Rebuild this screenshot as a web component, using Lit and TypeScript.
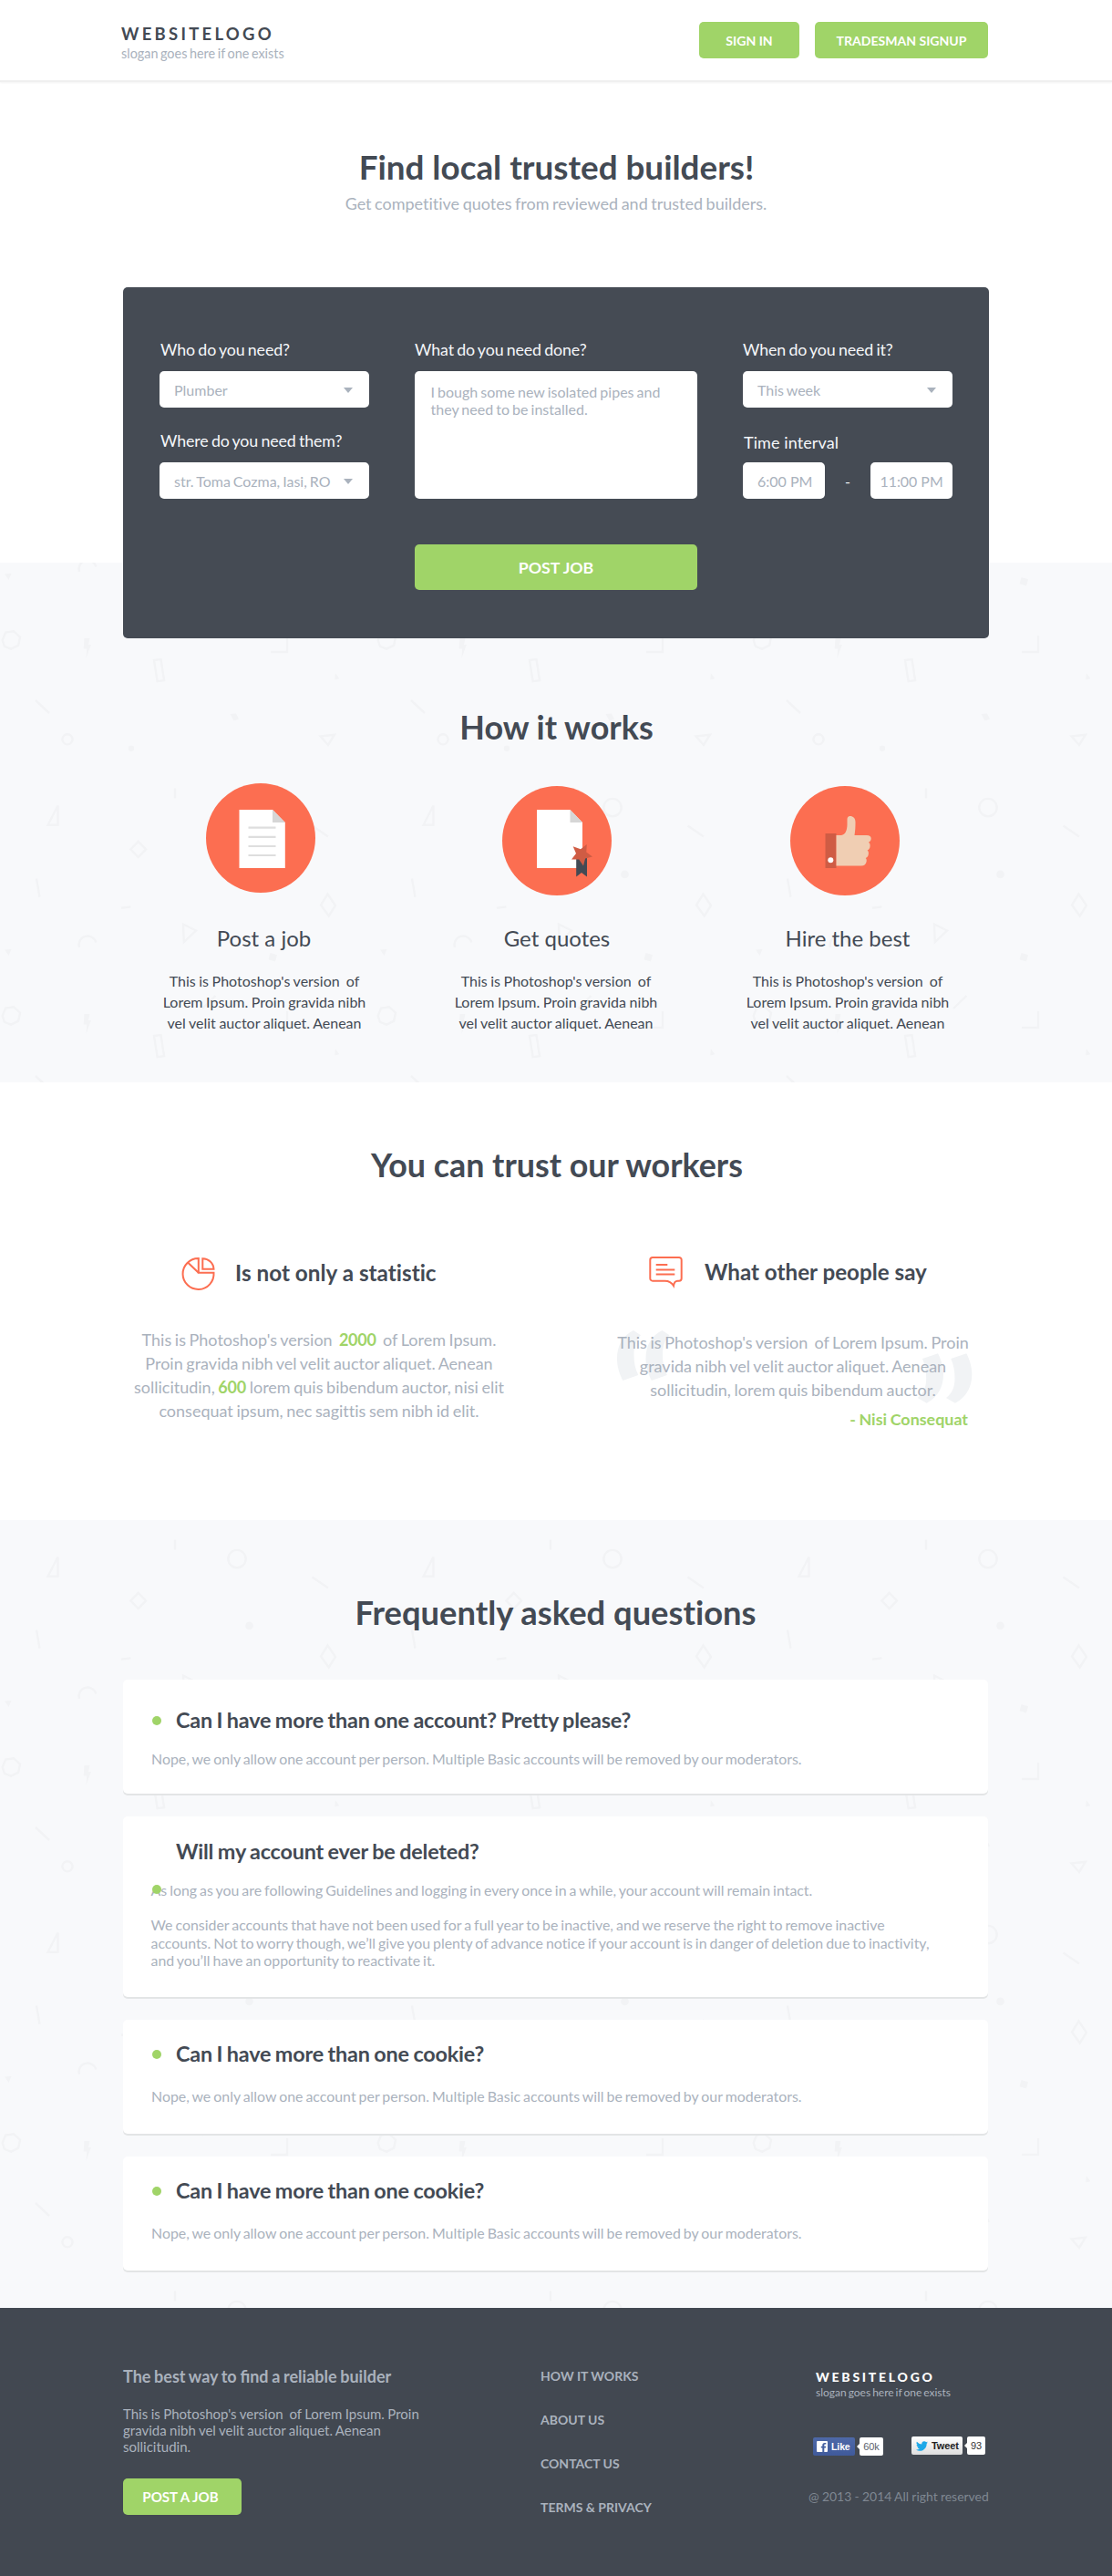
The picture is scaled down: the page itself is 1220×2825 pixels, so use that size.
import { LitElement, html, css, svg, nothing } from "lit";
import { customElement, property } from "lit/decorators.js";

const reset = css`
  *, *::before, *::after { box-sizing: border-box; }
  h1, h2, h3, p, ul { margin: 0; padding: 0; font-weight: 400; }
  ul { list-style: none; }
  svg { display: block; }
`;

@customElement("shape-pattern")
class ShapePattern extends LitElement {
  /** Distance of the section from the page top, so tiles line up between sections. */
  @property({ type: Number }) offset = 0;

  static styles = css`
    :host { position: absolute; inset: 0; display: block; overflow: hidden; }
    svg { display: block; width: 100%; height: 100%; }
    .line { fill: none; stroke: #f2f3f5; stroke-width: 2.4; }
    .solid { fill: #f2f3f5; }
  `;

  render() {
    return html`<svg aria-hidden="true">
      <defs>
        <pattern id="tile" width="412" height="412" patternUnits="userSpaceOnUse" patternTransform="translate(0 ${-(this.offset % 412)})">
          <g class="line">
            <path d="M86.8 215a9.6 9.6 0 1 1 18.6-5.5" />
            <path d="M2.7 290l3.4-8.5 8.9-1.3 7 6.4-1.8 9-8 4-7.3-2.8z" />
            <path d="M169 312l7.5-1 3.6 23.2-7.5 1z" />
            <path d="M39 356l15 14" />
            <circle cx="74" cy="398.8" r="5.6" />
            <path d="M297 303h18v-18" />
            <path d="M351.5 395.5l15.5-1.8-7 11.3z" />
            <path d="M192 40.5v11" />
            <path d="M63.5 59.5v21.3h-11z" />
            <circle cx="260" cy="61.6" r="9.7" />
            <path d="M342.5 81.6l17.5 11.8" />
            <path d="M151.7 98.8l8.4 8.6-8.4 8.6-8.4-8.6z" />
            <path d="M40 139.5l3.5 20.3" />
            <path d="M359.5 156.5l8.5 12.5-7.3 11.5-8.7-12z" />
            <path d="M132.8 171.8l10.7-1.4" />
            <path d="M201 189.5l14 7-13.2 12.5z" />
            <path d="M222 282l14.5-14" />
          </g>
          <g class="solid">
            <path d="M5 217.5l7.5-.5-3 7z" />
            <path d="M92.5 288h6l-1.6 7h3l-5.5 15 .8-10.5h-3.6z" />
            <circle cx="144" cy="408.8" r="3.2" />
            <path d="M367.8 326l4.5 6.3-5 1.2z" />
            <path d="M252.5 371l6.5-.5 3 6-5.5 2z" />
            <circle cx="273.5" cy="134.9" r="4.3" />
            <path d="M296.5 221l7.5 2.2-2 7.3-7.5-2.2z" />
          </g>
        </pattern>
      </defs>
      <rect width="100%" height="100%" fill="url(#tile)" />
    </svg>`;
  }
}

@customElement("site-header")
class SiteHeader extends LitElement {
  static styles = [reset, css`
    :host { display: flex; justify-content: space-between; align-items: flex-start; height: 88px; padding: 24px 136px 0 133px; background: #fff; box-shadow: 0 2px 0 #efefef, 0 3px 2px rgba(0,0,0,.05); }
    .logo { padding-top: 3px; }
    .name { font-size: 18.5px; line-height: 20px; font-weight: 700; letter-spacing: 3.25px; color: #434a54; }
    .slogan { margin-top: 2px; font-size: 14.4px; line-height: 20px; word-spacing: -1.1px; color: #aab2bd; }
    .actions { display: flex; gap: 17px; }
    .btn { display: flex; align-items: center; justify-content: center; width: 110px; height: 40px; border-radius: 5px; background: #a0d468; color: #fff; font-size: 14.05px; font-weight: 700; }
    .btn.wide { width: 190px; }
  `];
  render() {
    return html`
      <div class="logo"><div class="name">WEBSITELOGO</div><div class="slogan">slogan goes here if one exists</div></div>
      <div class="actions"><a class="btn">SIGN IN</a><a class="btn wide">TRADESMAN SIGNUP</a></div>`;
  }
}

@customElement("job-form")
class JobForm extends LitElement {
  static styles = [reset, css`
    :host { position: relative; z-index: 2; display: grid; grid-template-columns: 230px 310px 230px; column-gap: 50px; align-items: start; width: 950px; height: 385px; margin: 79px 0 -83px 135px; padding: 57px 40px 0; border-radius: 5px; background: #454b54; }
    .label { height: 22px; margin-bottom: 13px; color: #f5f7fa; font-size: 17.8px; line-height: 22px; letter-spacing: -.1px; word-spacing: -1.2px; white-space: nowrap; }
    .label.second { margin-top: 25px; }
    .label.inset { padding-left: 1px; }
    .label.time { margin-top: 27px; margin-bottom: 11px; padding-left: 1px; font-size: 18px; letter-spacing: .1px; word-spacing: 0; }
    .field { display: flex; align-items: center; justify-content: space-between; height: 40px; padding: 0 18.5px 0 16px; border-radius: 5px; background: #fff; color: #aab2bd; font-size: 16px; word-spacing: -1.1px; white-space: nowrap; }
    .caret { width: 0; height: 0; margin-top: 2px; border: 5.5px solid transparent; border-top: 6px solid #aab2bd; border-bottom: 0; }
    .area { height: 140px; padding: 13px 16px 0 17.5px; border-radius: 5px; background: #fff; color: #aab2bd; font-size: 16px; line-height: 19.2px; word-spacing: -1px; white-space: nowrap; }
    .submit { display: flex; align-items: center; justify-content: center; height: 50px; margin-top: 50px; border-radius: 5px; background: #a0d468; color: #fff; font-size: 17.75px; font-weight: 700; }
    .range { display: flex; align-items: center; justify-content: space-between; color: #f5f7fa; font-size: 16px; }
    .range .field { width: 90px; justify-content: flex-start; padding-right: 0; word-spacing: 0; }
    .range .field.to { padding-left: 10.5px; font-size: 15.88px; }
  `];
  select(value: string) {
    return html`<div class="field"><span>${value}</span><i class="caret"></i></div>`;
  }
  render() {
    return html`
      <div>
        <p class="label inset">Who do you need?</p>${this.select("Plumber")}
        <p class="label inset second">Where do you need them?</p>${this.select("str. Toma Cozma, Iasi, RO")}
      </div>
      <div>
        <p class="label">What do you need done?</p>
        <div class="area">I bough some new isolated pipes and<br />they need to be installed.</div>
        <a class="submit">POST JOB</a>
      </div>
      <div>
        <p class="label">When do you need it?</p>${this.select("This week")}
        <p class="label time">Time interval</p>
        <div class="range"><div class="field">6:00 PM</div><span>-</span><div class="field to">11:00 PM</div></div>
      </div>`;
  }
}

const stepIcons = {
  post: svg`
    <circle cx="60" cy="60" r="60" fill="#fc6e51" />
    <path d="M36.5 29h36.5l13.8 14v50H36.5z" fill="#fff" />
    <path d="M73 29l13.8 14H73z" fill="#d6d6d6" />
    <path d="M46.5 48.7h30M46.5 58.8h30M46.5 69h30M46.5 79h30" stroke="#dedede" stroke-width="2.2" />`,
  quotes: svg`
    <circle cx="60" cy="60" r="60" fill="#fc6e51" />
    <path d="M38 26h36.5L88 40v50H38z" fill="#fff" />
    <path d="M74.5 26L88 40H74.5z" fill="#d6d6d6" />
    <path d="M81.2 78H93v21.6L87 95l-5.8 4.6z" fill="#434a54" />
    <path d="M92.8 64l-.5 8.5 6.7 4.9-7.9 2-2.1 8-4.8-6.900-8.2 0 5-6.4-3.3-7.8 8.3 2.9z" fill="#cf5c44" />`,
  hire: svg`
    <circle cx="60" cy="60" r="60" fill="#fc6e51" />
    <rect x="38.5" y="52" width="12" height="38" fill="#cf5c44" />
    <circle cx="44.3" cy="81.3" r="3" fill="#fff" />
    <path d="M50.5 54h5.5c4.5-.6 6.5-5.5 6.5-12v-5.5c0-2.3 1.2-3.5 3-3.5 3.6 0 6 2.3 6 6.5 0 5.5-.2 10-1 14.5H84c3 0 4.7 1.2 4.7 3.6 0 2-.9 3.6-2.8 4.1 1.3.8 1.7 2 1.7 3.7 0 2.3-1 4.2-3 5 1.1.8 1.4 2 1.3 3.7-.1 2.5-1.2 4.2-3.2 4.9 1 .8 1.2 2 1 3.5-.4 3-2.4 5-6 5H50.5z" fill="#f0ceb3" />`,
};

@customElement("how-it-works")
class HowItWorks extends LitElement {
  static styles = [reset, css`
    :host { position: relative; display: block; height: 570px; padding-top: 158px; background: #f8f9fb; color: #434a54; }
    .body { position: relative; }
    h2 { padding-left: 1px; font-size: 35.95px; line-height: 45px; font-weight: 700; text-align: center; }
    .steps { display: grid; grid-template-columns: repeat(3, 320px); width: 960px; margin: 42px 0 0 130px; text-align: center; }
    .icon { width: 120px; height: 120px; margin: 0 auto; }
    .icon.post { margin: -3px 0 0 95.5px; }
    .icon.quotes { margin-left: 101px; }
    .icon.hire { margin-left: 96.5px; }
    h3 { margin-top: 32px; font-size: 24px; line-height: 30px; }
    .icon.post + h3 { margin-top: 35px; padding-right: 1px; }
    .icon.quotes + h3 { padding-left: 2px; }
    p { margin-top: 20px; font-size: 16px; line-height: 23px; word-spacing: -.5px; }
  `];
  render() {
    const steps = [["post", "Post a job"], ["quotes", "Get quotes"], ["hire", "Hire the best"]] as const;
    return html`<shape-pattern .offset=${617}></shape-pattern>
      <div class="body">
        <h2>How it works</h2>
        <div class="steps">${steps.map(([key, title]) => html`
          <div>
            <svg class="icon ${key}" viewBox="0 0 120 120">${stepIcons[key]}</svg>
            <h3>${title}</h3>
            <p>This is Photoshop's version&nbsp; of<br />Lorem Ipsum. Proin gravida nibh<br />vel velit auctor aliquet. Aenean</p>
          </div>`)}
        </div>
      </div>`;
  }
}

@customElement("trust-section")
class TrustSection extends LitElement {
  static styles = [reset, css`
    :host { display: block; height: 480px; padding-top: 68px; background: #fff; color: #434a54; }
    h2 { padding-left: 2px; font-size: 35.85px; line-height: 45px; font-weight: 700; text-align: center; }
    .cols { display: grid; grid-template-columns: 520px 520px; width: 1040px; margin: 78px 0 0 90px; }
    .head { display: flex; align-items: center; gap: 21px; height: 38px; padding-left: 109px; }
    .head svg { width: 38px; height: 38px; fill: none; stroke: #fc6e51; stroke-width: 2; }
    .head h3 { margin-top: -3px; font-size: 24.3px; line-height: 30px; font-weight: 700; }
    .say .head { gap: 23px; margin-top: -1px; padding-left: 102px; }
    .say .head h3 { font-size: 24.2px; }
    .text { margin-top: 40px; color: #aab2bd; font-size: 18px; line-height: 26px; word-spacing: -1px; text-align: center; white-space: nowrap; }
    b { color: #a0d468; font-weight: 700; letter-spacing: -.2px; }
    .quote { position: relative; margin-top: 44px; }
    .quote .text { position: relative; margin: 0; }
    .marks { position: absolute; left: 60px; top: -1px; width: 400px; height: 84px; fill: #f1f3f5; }
    .author { margin-top: 6px; padding-right: 68px; color: #a0d468; font-size: 17.9px; line-height: 26px; font-weight: 700; word-spacing: -.7px; text-align: right; }
  `];
  render() {
    return html`
      <h2>You can trust our workers</h2>
      <div class="cols">
        <div>
          <div class="head">
            <svg viewBox="0 0 38 38"><path d="M18.8 2A17 17 0 1 0 35.5 17.8H18.8z" /><path d="M7 6.5l11.8 11.3M23.3 2.2v11.5h12.2A12 12 0 0 0 23.3 2.2z" /></svg>
            <h3>Is not only a statistic</h3>
          </div>
          <p class="text">This is Photoshop's version&nbsp; <b>2000</b>&nbsp; of Lorem Ipsum.<br />Proin gravida nibh vel velit auctor aliquet. Aenean<br />sollicitudin, <b>600</b> lorem quis bibendum auctor, nisi elit<br />consequat ipsum, nec sagittis sem nibh id elit.</p>
        </div>
        <div class="say">
          <div class="head">
            <svg viewBox="0 0 38 38"><path d="M4 2h29a2.7 2.7 0 0 1 2.7 2.7V25a2.7 2.7 0 0 1-2.7 2.7h-1.5c-2.5 0-4 1.8-4.5 5.3-2-3.3-5-5.3-9.5-5.3H4A2.7 2.7 0 0 1 1.3 25V4.7A2.7 2.7 0 0 1 4 2z" /><path d="M7.7 10h12.6M7.7 15.5h20.6M7.7 20.5h20.6" /></svg>
            <h3>What other people say</h3>
          </div>
          <div class="quote">
            <svg class="marks" viewBox="0 0 400 84" aria-hidden="true">
              <path d="M25 1l8 5.3c-6 6.5-7.5 13-7.5 22 0 8 1.3 14.5 4.8 21.7L13.3 56C9 47 7 40.5 7 32 7 18 12.5 7.5 25 1z" />
              <path transform="translate(31.5 0)" d="M25 1l8 5.3c-6 6.5-7.5 13-7.5 22 0 8 1.3 14.5 4.8 21.7L13.3 56C9 47 7 40.5 7 32 7 18 12.5 7.5 25 1z" />
              <path d="M342 32l17-5.7c4.3 8.5 6 15.5 6 23 0 14-6 24.5-18.3 31.4l-10-5.7c7.5-6 9.5-13 9.5-21.5 0-8-1.2-14.5-4.2-21.5z" />
              <path transform="translate(31.3 0)" d="M342 32l17-5.7c4.3 8.5 6 15.5 6 23 0 14-6 24.5-18.3 31.4l-10-5.7c7.5-6 9.5-13 9.5-21.5 0-8-1.2-14.500-4.2-21.5z" />
            </svg>
            <p class="text">This is Photoshop's version&nbsp; of Lorem Ipsum. Proin<br />gravida nibh vel velit auctor aliquet. Aenean<br />sollicitudin, lorem quis bibendum auctor.</p>
          </div>
          <p class="author">- Nisi Consequat</p>
        </div>
      </div>`;
  }
}

interface Faq { title: string; kind: string; body: string[][]; }

const nope = "Nope, we only allow one account per person. Multiple Basic accounts will be removed by our moderators.";
const faqs: Faq[] = [
  { title: "Can I have more than one account? Pretty please?", kind: "first", body: [[nope]] },
  {
    title: "Will my account ever be deleted?", kind: "long", body: [
      ["As long as you are following Guidelines and logging in every once in a while, your account will remain intact."],
      ["We consider accounts that have not been used for a full year to be inactive, and we reserve the right to remove inactive",
        "accounts. Not to worry though, we’ll give you plenty of advance notice if your account is in danger of deletion due to inactivity,",
        "and you’ll have an opportunity to reactivate it."],
    ],
  },
  { title: "Can I have more than one cookie?", kind: "", body: [[nope]] },
  { title: "Can I have more than one cookie?", kind: "", body: [[nope]] },
];

@customElement("faq-section")
class FaqSection extends LitElement {
  static styles = [reset, css`
    :host { position: relative; display: block; height: 864px; padding-top: 79px; background: #f8f9fb; color: #434a54; }
    .body { position: relative; }
    h2 { padding-right: 1px; font-size: 36.35px; line-height: 45px; font-weight: 700; text-align: center; }
    .list { display: flex; flex-direction: column; gap: 25px; width: 949px; margin: 51px 0 0 135px; }
    .card { position: relative; height: 125px; padding: 22px 30px 0 31px; border-radius: 5px; background: #fff; box-shadow: 0 2px 0 #e3e5e6; }
    .title { display: flex; align-items: center; gap: 16px; height: 30px; margin-bottom: 22px; padding-left: 1px; }
    .dot { width: 10px; height: 10px; margin-top: 2px; border-radius: 50%; background: #a0d468; }
    h3 { font-size: 23.4px; line-height: 30px; font-weight: 700; letter-spacing: -.2px; word-spacing: -.9px; }
    p { color: #aab2bd; font-size: 15.9px; line-height: 19px; word-spacing: -1.05px; white-space: nowrap; }
    .first { padding-top: 29px; }
    .first .title { margin-bottom: 18px; }
    .long { height: 198px; padding: 23px 30px 0 30.5px; }
    .long .title { margin-bottom: 18px; padding-left: 27.5px; }
    .long .dot { position: absolute; left: 32px; top: 75px; margin: 0; }
    .long p { line-height: 19.4px; }
    .long p + p { margin-top: 19px; }
  `];
  render() {
    return html`<shape-pattern .offset=${1667}></shape-pattern>
      <div class="body">
        <h2>Frequently asked questions</h2>
        <div class="list">${faqs.map(f => html`
          <div class="card ${f.kind}">
            <div class="title">${f.kind === "long" ? nothing : html`<i class="dot"></i>`}<h3>${f.title}</h3></div>
            ${f.body.map(p => html`<p>${p.map((line, i) => html`${i ? html`<br />` : nothing}${line}`)}</p>`)}
            ${f.kind === "long" ? html`<i class="dot"></i>` : nothing}
          </div>`)}
        </div>
      </div>`;
  }
}

@customElement("site-footer")
class SiteFooter extends LitElement {
  static styles = [reset, css`
    :host { display: grid; grid-template-columns: 458px 294px 200px; align-items: start; height: 294px; padding: 63px 0 0 135px; background: #424851; color: #aab2bd; }
    h3 { font-size: 18px; line-height: 24px; font-weight: 700; word-spacing: -.7px; font-variant-ligatures: common-ligatures; }
    .about p { margin-top: 20px; font-size: 15px; line-height: 18px; word-spacing: -.4px; white-space: nowrap; }
    .btn { display: flex; align-items: center; justify-content: center; width: 130px; height: 40px; margin-top: 26px; padding-right: 4px; border-radius: 5px; background: #a0d468; color: #fff; font-size: 15.09px; font-weight: 700; }
    .links { margin-top: -12px; font-size: 14px; line-height: 48px; font-weight: 700; }
    .name { margin: 5px 0 0 8px; color: #fff; font-size: 14px; line-height: 16px; font-weight: 900; letter-spacing: 2.75px; }
    .slogan { margin: 1px 0 0 8px; font-size: 12px; line-height: 16px; word-spacing: -1.1px; }
    .social { display: flex; align-items: flex-start; margin-top: 40px; padding-left: 5px; font-family: "Liberation Sans", Arial, sans-serif; font-size: 11px; line-height: 20px; letter-spacing: -.1px; }
    .like, .tweet { display: flex; align-items: center; height: 20px; border-radius: 2px; font-weight: 700; }
    .like { width: 46px; margin-top: 1px; padding-left: 4px; gap: 4px; background: linear-gradient(#4e69a8, #3f5a9b); color: #fff; font-size: 10.5px; }
    .tweet { width: 56px; margin-left: 31px; padding-left: 5px; gap: 4px; background: linear-gradient(#fff, #dedede); color: #222; }
    .count { position: relative; width: 26px; height: 20px; margin-left: 5px; border-radius: 2px; background: #fff; color: #5b626c; text-align: center; }
    .like + .count { margin-top: 1px; }
    .tweet + .count { width: 20px; color: #333; }
    .count::before { content: ""; position: absolute; left: -3px; top: 7px; border: 3px solid transparent; border-right-color: #fff; border-left: 0; }
    .copy { margin-top: 35px; color: #7f8791; font-size: 13.95px; line-height: 20px; word-spacing: -.3px; white-space: nowrap; }
  `];
  render() {
    return html`
      <div class="about">
        <h3>The best way to find a reliable builder</h3>
        <p>This is Photoshop's version&nbsp; of Lorem Ipsum. Proin<br />gravida nibh vel velit auctor aliquet. Aenean<br />sollicitudin.</p>
        <a class="btn">POST A JOB</a>
      </div>
      <ul class="links">${["HOW IT WORKS", "ABOUT US", "CONTACT US", "TERMS & PRIVACY"].map(l => html`<li>${l}</li>`)}</ul>
      <div>
        <div class="name">WEBSITELOGO</div>
        <div class="slogan">slogan goes here if one exists</div>
        <div class="social">
          <span class="like"><svg width="12" height="12" viewBox="0 0 12 12"><rect width="12" height="12" rx="1" fill="#fff" /><path d="M8.3 12V7.6h1.6l.3-1.9H8.3V4.6c0-.6.3-1 1-1h1V1.900H8.8c-1.6 0-2.500 1-2.500 2.500v1.300H4.800v1.900h1.500V12z" fill="#4460a0" /></svg>Like</span>
          <span class="count">60k</span>
          <span class="tweet"><svg width="13" height="13" viewBox="0 0 24 24"><path fill="#1da8e8" d="M24 4.600a10 10 0 0 1-2.800.8 5 5 0 0 0 2.100-2.700 10 10 0 0 1-3.100 1.200 4.900 4.900 0 0 0-8.400 4.500A14 14 0 0 1 1.700 3.200a4.900 4.900 0 0 0 1.500 6.500 5 5 0 0 1-2.200-.6 4.900 4.900 0 0 0 3.900 4.900 5 5 0 0 1-2.200.1 4.900 4.900 0 0 0 4.600 3.400A9.900 9.900 0 0 1 0 19.500 14 14 0 0 0 7.500 21.700c9.100 0 14-7.500 14-14v-.6A10 10 0 0 0 24 4.600z" /></svg>Tweet</span>
          <span class="count">93</span>
        </div>
        <p class="copy">@ 2013 - 2014 All right reserved</p>
      </div>`;
  }
}

@customElement("app-root")
class AppRoot extends LitElement {
  static styles = [reset, css`
    :host { display: block; width: 1220px; height: 2825px; overflow: hidden; background: #fff; font-family: Lato, "Liberation Sans", sans-serif; font-variant-ligatures: none; }
    .hero { height: 529px; padding-top: 73px; }
    h1 { padding-left: 1px; color: #434a54; font-size: 36.8px; line-height: 44px; font-weight: 700; text-align: center; }
    .sub { margin-top: 5px; color: #aab2bd; font-size: 18px; line-height: 26px; word-spacing: -1.1px; text-align: center; }
  `];
  render() {
    return html`
      <site-header></site-header>
      <section class="hero">
        <h1>Find local trusted builders!</h1>
        <p class="sub">Get competitive quotes from reviewed and trusted builders.</p>
        <job-form></job-form>
      </section>
      <how-it-works></how-it-works>
      <trust-section></trust-section>
      <faq-section></faq-section>
      <site-footer></site-footer>`;
  }
}
